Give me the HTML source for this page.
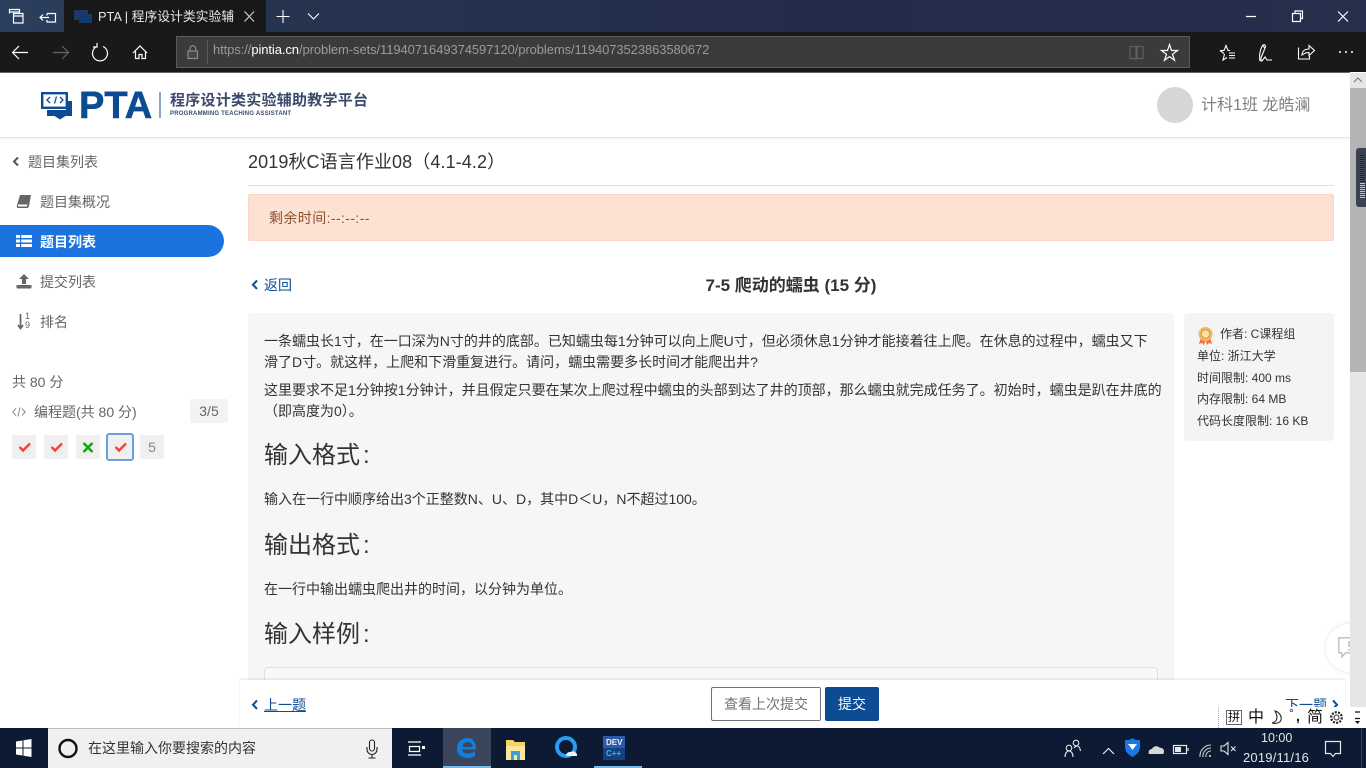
<!DOCTYPE html>
<html lang="zh">
<head>
<meta charset="utf-8">
<title>PTA | 程序设计类实验辅助教学平台</title>
<style>
*{box-sizing:border-box}
html,body{margin:0;padding:0;width:1366px;height:768px;overflow:hidden;background:#fff;font-family:"Liberation Sans","Noto Sans CJK SC",sans-serif}
.a{position:absolute;white-space:nowrap}
svg{position:absolute;overflow:visible}
.s{fill:none;stroke:#fff;stroke-width:1.2}
</style>
</head>
<body>
<!-- title bar -->
<div class="a" style="left:0;top:0;width:1366px;height:32px;background:linear-gradient(90deg,#2b3f5e 0,#27344f 20%,#232c4b 60%,#262f4c 100%)"></div>
<div class="a" style="left:64px;top:0;width:202px;height:32px;background:#181818"></div>
<!-- toolbar -->
<div class="a" style="left:0;top:32px;width:1366px;height:40px;background:#191919"></div>
<div class="a" style="left:0;top:72px;width:1350px;height:1px;background:#666"></div>
<div class="a" style="left:176px;top:36px;width:1014px;height:32px;background:#3b3b3b;border:1px solid #5a5a5a"></div>
<div class="a" style="left:207px;top:40px;width:1px;height:24px;background:#5c5c5c"></div>
<svg style="left:0;top:0" width="1366" height="72">
<g class="s"><path d="M9.500 13.500V9.500h10v4M9.500 12h10M13.500 13.500h9.500v9.500h-9.500zM13.500 16h9.500"/>
<path d="M47 13.500h8.500v8.500h-8.500v-2M47 13.500v2M40 17.500h9M43 14.500l-3 3 3 3"/>
<path d="M276.500 16.500h13M283 10v13M308 13.500l5.500 5.500 5.500-5.500" stroke-width="1.100"/>
<path d="M244.500 11.500l9.500 10M254 11.500l-9.500 10" stroke="#ccc"/>
<path d="M1246 16.500h10M1292.500 13.500h8v8h-8zM1295 13.500v-2.500h7.500v7.500h-2M1338 11.500l10 10M1348 11.500l-10 10"/></g>
<rect x="74" y="10" width="14" height="10" fill="#1c3a63"/><rect x="79" y="14" width="13" height="9" fill="#123a72"/>
<g class="s" stroke-width="1.300"><path d="M28 52.500H13M19 46l-6.500 6.500 6.500 6.500"/>
<path d="M68 52.500H53M62 46l6.500 6.500-6.500 6.500" style="stroke:#666"/>
<path d="M97 46.500a7.500 7.500 0 1 0 6 0M97 43v4h-4"/>
<path d="M133 53l7-7 7 7M135.500 51v7.500h3.500v-4h3v4h3.500V51"/>
<path d="M1161.500 50.500h6l2-6 2 6h6l-5 3.800 2 6-5-3.700-5 3.700 2-6z" stroke-width="1.200"/>
<path d="M1220 50.500h4l2-5 2 5h2M1229 53h6M1229 55.500h6M1229 58h6M1224.500 54l-1.500 6 4-2.500M1220 50.500l4 3" stroke-width="1.100"/>
<path d="M1260 61c-1-5 0-12 3-16 2-1 3 1 2 3l-4 10 0 3h1l3-4 2 3h5M1263 46l2 2" stroke-width="1.100"/>
<path d="M1298.500 47.500v11.500h11v-3M1302 55c0-4 3-6 7-6v-3.500l5.500 5-5.500 5v-3c-3 0-5 1-7 2.500z" stroke-width="1.100"/></g>
<g fill="#fff"><circle cx="1340" cy="52" r="1"/><circle cx="1346" cy="52" r="1"/><circle cx="1352" cy="52" r="1"/></g>
<g fill="none" stroke="#8c8c8c" stroke-width="1.200"><rect x="188" y="51" width="9.500" height="7.500" fill="#8c8c8c" fill-opacity=".15"/><path d="M190 51v-2.500a2.800 2.800 0 0 1 5.600 0V51"/></g>
<g fill="none" stroke="#5f5f5f" stroke-width="1.200"><path d="M1136 47.500v12.500M1130 46.500h6v12h-6zM1137 46.500h6v12h-6z"/></g>
</svg>
<div class="a" style="left:98px;top:8px;font-size:12.800px;line-height:17px;color:#e6e6e6">PTA | 程序设计类实验辅</div>
<div class="a" style="left:213px;top:41px;font-size:13px;line-height:18px;letter-spacing:-.09px;color:#9a9a9a">https://<span style="color:#fff">pintia.cn</span>/problem-sets/1194071649374597120/problems/1194073523863580672</div>

<!-- header -->
<div class="a" style="left:0;top:73px;width:1350px;height:65px;background:#fff;border-bottom:1px solid #e6e6e6;box-shadow:0 1px 2px rgba(0,0,0,.06)"></div>
<svg style="left:0;top:0" width="400" height="130">
<path d="M66 101h6v15H65.500l-5.500 3.500-5.500-3.500H47v-6h19z" fill="#0d4b92"/>
<rect x="42.200" y="93.200" width="24.600" height="14.600" fill="#fff" stroke="#0d4b92" stroke-width="2.400"/>
<path d="M50 97l-3 3 3 3M56.500 96.500l-2 7M60 97l3 3-3 3" fill="none" stroke="#0d4b92" stroke-width="1.300"/>
<rect x="159.500" y="92" width="1" height="26" fill="#0d4b92"/>
</svg>
<div class="a" style="left:79px;top:87px;font-size:38px;line-height:38px;font-weight:700;color:#0d4b92;-webkit-text-stroke:.6px #0d4b92">PTA</div>
<div class="a" style="left:170px;top:92px;font-size:15px;line-height:18px;font-weight:700;color:#3a4a6a;letter-spacing:.25px">程序设计类实验辅助教学平台</div>
<div class="a" style="left:170px;top:111px;font-size:6px;line-height:7px;font-weight:700;color:#3a4a6a;letter-spacing:.21px">PROGRAMMING TEACHING ASSISTANT</div>
<div class="a" style="left:1157px;top:87px;width:36px;height:36px;border-radius:50%;background:#d6d6d6"></div>
<div class="a" style="left:1201px;top:96px;font-size:16px;line-height:20px;color:#808080">计科1班 龙皓澜</div>

<!-- sidebar -->
<div class="a" style="left:0;top:225px;width:224px;height:32px;background:#1a73de;border-radius:0 16px 16px 0"></div>
<svg style="left:0;top:140px" width="240" height="340">
<path d="M18 17.500l-4 4 4 4" fill="none" stroke="#555" stroke-width="2"/>
<path d="M20 55h11l-2 11c0 1-1 2-2 2H18c-1 0-1.500-1-1-3z" fill="#666"/><path d="M18 64.500h9.500l-.5 2H18z" fill="#fff"/>
<g fill="#fff"><rect x="16" y="95" width="16" height="3"/><rect x="16" y="99.500" width="16" height="3"/><rect x="16" y="104" width="16" height="3"/></g>
<rect x="20" y="95" width="1.200" height="12" fill="#1a73de"/>
<path d="M24 134l5 5h-3v5h-4v-5h-3zM16.500 145h15v2.500a1 1 0 0 1-1 1h-13a1 1 0 0 1-1-1z" fill="#666"/>
<path d="M20.500 174v14M18 185l2.500 3.500 2.500-3.500" fill="none" stroke="#666" stroke-width="1.700"/>
</svg>
<div class="a" style="left:25px;top:312px;font-size:9px;line-height:9px;color:#666">1</div>
<div class="a" style="left:25px;top:321px;font-size:9px;line-height:9px;color:#666">9</div>
<div class="a" style="left:28px;top:152px;font-size:14px;line-height:20px;color:#666">题目集列表</div>
<div class="a" style="left:40px;top:192px;font-size:14px;line-height:20px;color:#666">题目集概况</div>
<div class="a" style="left:40px;top:232px;font-size:14px;line-height:20px;color:#fff;font-weight:700">题目列表</div>
<div class="a" style="left:40px;top:272px;font-size:14px;line-height:20px;color:#666">提交列表</div>
<div class="a" style="left:40px;top:312px;font-size:14px;line-height:20px;color:#666">排名</div>
<div class="a" style="left:12px;top:372px;font-size:14px;line-height:20px;color:#666">共 80 分</div>
<svg style="left:12px;top:406px" width="14" height="12"><path d="M4 2.500L.8 6 4 9.500M10 2.500L13.200 6 10 9.500" fill="none" stroke="#888" stroke-width="1"/><path d="M8 1.500L6 10.500" stroke="#888" stroke-width="1"/></svg>
<div class="a" style="left:34px;top:402px;font-size:14px;line-height:20px;color:#666">编程题(共 80 分)</div>
<div class="a" style="left:190px;top:399px;width:38px;height:24px;background:#f3f3f3;border-radius:2px;text-align:center;font-size:14px;line-height:24px;color:#666">3/5</div>
<div class="a" style="left:12px;top:435px;width:24px;height:24px;background:#efefef;border-radius:2px"></div>
<div class="a" style="left:44px;top:435px;width:24px;height:24px;background:#efefef;border-radius:2px"></div>
<div class="a" style="left:76px;top:435px;width:24px;height:24px;background:#efefef;border-radius:2px"></div>
<div class="a" style="left:106px;top:433px;width:28px;height:28px;background:#efefef;border-radius:3px;border:2px solid #6a9fe0"></div>
<div class="a" style="left:140px;top:435px;width:24px;height:24px;background:#efefef;border-radius:2px;text-align:center;font-size:14px;line-height:24px;color:#888">5</div>
<svg style="left:0;top:430px" width="170" height="34"><g fill="none" stroke-width="2.400"><path d="M19.500 17l3.500 3.500 7-7M51.500 17l3.500 3.500 7-7M115.500 17l3.500 3.500 7-7" stroke="#f5403a"/><path d="M83.500 13l9 9M92.500 13l-9 9" stroke="#0aa60a"/></g></svg>

<!-- main -->
<div class="a" style="left:248px;top:150px;font-size:18px;line-height:24px;letter-spacing:.1px;color:#333">2019秋C语言作业08（4.1-4.2）</div>
<div class="a" style="left:248px;top:185px;width:1086px;height:1px;background:#dedede"></div>
<div class="a" style="left:248px;top:194px;width:1086px;height:47px;background:#fde1d3;border:1px solid #fcd6c2;border-radius:2px"></div>
<div class="a" style="left:269px;top:208px;font-size:14px;line-height:20px;letter-spacing:.4px;color:#8a5230">剩余时间:--:--:--</div>
<svg style="left:250px;top:279px" width="12" height="12"><path d="M7 1.500L3 5.700l4 4.200" fill="none" stroke="#0d4b92" stroke-width="2"/></svg>
<div class="a" style="left:264px;top:275px;font-size:14px;line-height:20px;color:#0d4b92">返回</div>
<div class="a" style="left:248px;top:276px;width:1086px;text-align:center;font-size:17px;line-height:20px;font-weight:700;color:#333">7-5 爬动的蠕虫 (15 分)</div>

<div class="a" style="left:248px;top:313px;width:926px;height:370px;background:#f6f6f6;border-radius:4px 4px 0 0;overflow:hidden">
 <div class="a" style="left:16px;top:18px;width:894px;white-space:normal;font-size:14px;line-height:21px;color:#333">一条蠕虫长1寸，在一口深为N寸的井的底部。已知蠕虫每1分钟可以向上爬U寸，但必须休息1分钟才能接着往上爬。在休息的过程中，蠕虫又下滑了D寸。就这样，上爬和下滑重复进行。请问，蠕虫需要多长时间才能爬出井?</div>
 <div class="a" style="left:16px;top:67px;width:900px;white-space:normal;font-size:14px;line-height:21px;color:#333">这里要求不足1分钟按1分钟计，并且假定只要在某次上爬过程中蠕虫的头部到达了井的顶部，那么蠕虫就完成任务了。初始时，蠕虫是趴在井底的（即高度为0）。</div>
 <div class="a" style="left:16px;top:127px;font-size:24px;line-height:32px;color:#333">输入格式<span style="margin-left:3px">:</span></div>
 <div class="a" style="left:16px;top:176px;font-size:14px;line-height:21px;color:#333">输入在一行中顺序给出3个正整数N、U、D，其中D＜U，N不超过100。</div>
 <div class="a" style="left:16px;top:217px;font-size:24px;line-height:32px;color:#333">输出格式<span style="margin-left:3px">:</span></div>
 <div class="a" style="left:16px;top:266px;font-size:14px;line-height:21px;color:#333">在一行中输出蠕虫爬出井的时间，以分钟为单位。</div>
 <div class="a" style="left:16px;top:306px;font-size:24px;line-height:32px;color:#333">输入样例<span style="margin-left:3px">:</span></div>
 <div class="a" style="left:16px;top:354px;width:894px;height:40px;background:#f8f8f8;border:1px solid #dfdfdf;border-radius:4px"></div>
</div>
<!-- info card -->
<div class="a" style="left:1184px;top:313px;width:150px;height:128px;background:#f4f4f4;border-radius:4px"></div>
<svg style="left:1197px;top:326px" width="18" height="20"><path d="M4 11l-2 7 3-1 2 2 2-6zM13 11l2 7-3-1-2 2-2-6z" fill="#f0714a"/><circle cx="8.500" cy="8" r="7" fill="#f4b860"/><circle cx="8.500" cy="8" r="4.300" fill="#fbe2a8" stroke="#e8894a" stroke-width="1"/></svg>
<div class="a" style="left:1220px;top:325px;font-size:12px;line-height:18px;color:#333">作者: C课程组</div>
<div class="a" style="left:1197px;top:347px;font-size:12px;line-height:18px;color:#333">单位: 浙江大学</div>
<div class="a" style="left:1197px;top:369px;font-size:12px;line-height:18px;color:#333">时间限制: 400 ms</div>
<div class="a" style="left:1197px;top:390px;font-size:12px;line-height:18px;color:#333">内存限制: 64 MB</div>
<div class="a" style="left:1197px;top:412px;font-size:12px;line-height:18px;color:#333">代码长度限制: 16 KB</div>
<div class="a" style="left:1326px;top:624px;width:48px;height:48px;border-radius:50%;background:#fff;box-shadow:0 0 5px rgba(0,0,0,.12)"></div>
<svg style="left:1338px;top:637px" width="12" height="22"><path d="M12 .8H.8v15h3v4l4-4H12" fill="none" stroke="#bbb" stroke-width="1.300"/><path d="M11 4v6M11 12v1.500" stroke="#bbb" stroke-width="1.500"/></svg>

<!-- footer -->
<div class="a" style="left:240px;top:680px;width:1105px;height:48px;background:#fff;box-shadow:0 -1px 2px rgba(0,0,0,.1)"></div>
<svg style="left:250px;top:699px" width="12" height="12"><path d="M7 1.500L3 5.700l4 4.200" fill="none" stroke="#0d4b92" stroke-width="2"/></svg>
<div class="a" style="left:264px;top:695px;font-size:14px;line-height:20px;color:#0d4b92;text-decoration:underline">上一题</div>
<div class="a" style="left:711px;top:687px;width:110px;height:34px;border:1px solid #6c757d;border-radius:2px;background:#fff;text-align:center;font-size:14px;line-height:32px;color:#6c757d">查看上次提交</div>
<div class="a" style="left:825px;top:687px;width:54px;height:34px;background:#0d4b92;border-radius:2px;text-align:center;font-size:14px;line-height:34px;color:#fff">提交</div>
<div class="a" style="left:1285px;top:695px;font-size:14px;line-height:20px;color:#0d4b92">下一题</div>
<svg style="left:1330px;top:699px" width="12" height="12"><path d="M3 1.500l4 4.200-4 4.200" fill="none" stroke="#0d4b92" stroke-width="2"/></svg>

<!-- scrollbar -->
<div class="a" style="left:1350px;top:73px;width:16px;height:655px;background:#e6e6e6"></div>
<div class="a" style="left:1350px;top:88px;width:16px;height:284px;background:#b4b4b4"></div>
<svg style="left:1350px;top:72px" width="16" height="16"><path d="M4 10l4-4 4 4" fill="none" stroke="#777" stroke-width="1"/></svg>
<div class="a" style="left:1356px;top:148px;width:10px;height:59px;background:#3b4252;border-radius:3px 0 0 3px"></div>
<div class="a" style="left:1360px;top:155px;width:5px;height:28px;background:repeating-linear-gradient(#222 0 1px,#4a4f5c 1px 2px)"></div>
<div class="a" style="left:1360px;top:183px;width:5px;height:16px;background:repeating-linear-gradient(#9fe08a 0 1px,#3b4252 1px 2px)"></div>

<!-- IME -->
<div class="a" style="left:1218px;top:707px;width:148px;height:21px;background:#fff"></div>
<div class="a" style="left:1218px;top:707px;width:0;height:21px;border-left:1px dotted #aaa"></div>
<div class="a" style="left:1226px;top:710px;width:16px;height:15px;border:1px solid #666;text-align:center;font-size:12px;line-height:13px;color:#111">拼</div>
<div class="a" style="left:1248px;top:709px;font-size:16px;line-height:18px;color:#111">中</div>
<svg style="left:1270px;top:710px" width="14" height="16"><path d="M5 1c4 1 7 5 6 9-1 3-5 4-9 3 4-1 5-3 5-6 0-2-1-4-2-6z" fill="none" stroke="#222" stroke-width="1.100"/></svg>
<div class="a" style="left:1289px;top:705px;font-size:12px;line-height:16px;color:#111">°</div>
<div class="a" style="left:1296px;top:707px;font-size:14px;line-height:18px;font-weight:700;color:#111">,</div>
<div class="a" style="left:1307px;top:709px;font-size:16px;line-height:18px;color:#111">简</div>
<svg style="left:1329px;top:710px" width="15" height="15"><circle cx="7.500" cy="7.500" r="2.500" fill="none" stroke="#222" stroke-width="1"/><circle cx="7.500" cy="7.500" r="5.300" fill="none" stroke="#222" stroke-width="2.200" stroke-dasharray="2 1.300"/></svg>
<svg style="left:1354px;top:711px" width="8" height="14"><path d="M1 1h5M1 7.500h5" stroke="#111" stroke-width="1.300"/><path d="M1 10h5l-2.500 3z" fill="#111"/></svg>

<!-- taskbar -->
<div class="a" style="left:0;top:728px;width:1366px;height:40px;background:#0c1a33"></div>
<div class="a" style="left:48px;top:728px;width:344px;height:40px;background:#f0f0f0;border-top:1px solid #bbb"></div>
<div class="a" style="left:443px;top:728px;width:48px;height:40px;background:#3b465c"></div>
<div class="a" style="left:443px;top:766px;width:48px;height:2px;background:#76b9ed"></div>
<div class="a" style="left:594px;top:766px;width:48px;height:2px;background:#76b9ed"></div>
<svg style="left:0;top:728px" width="1366" height="40">
<path d="M16 13.500l6.500-1v7H16zM23.500 12.300l8-1.300v8.500h-8zM16 20.500h6.500v7L16 26.500zM23.500 20.500h8V29l-8-1.300z" fill="#fff"/>
<circle cx="68" cy="20.500" r="8.500" fill="none" stroke="#111" stroke-width="2.400"/>
<g fill="none" stroke="#222" stroke-width="1.100"><rect x="369.500" y="12" width="5" height="11" rx="2.500"/><path d="M367 19v2.500a5 5 0 0 0 10 0V19M372 26.500V30M368.500 30h7"/></g>
<g fill="none" stroke="#fff" stroke-width="1.200"><path d="M408 14h13M408 27h13M409.500 18.500h10v5h-10z"/></g><rect x="422" y="18" width="3" height="3" fill="#fff"/>
<path d="M468 10c-7 0-11 5-11 10 0 7 5 10 11 10 3 0 5-.7 7-2v-4.500c-5 3-12 3-13-2h14c0-7-3-11.500-8-11.500zm-5.500 9c.5-3.500 3-5 5.500-5 3 0 4.500 2 4.500 5z" fill="#0f7fe0"/>
<path d="M506 12h7l2 2h10v18h-19z" fill="#f6d365"/><path d="M506 18h19v14h-19z" fill="#fde79a"/><path d="M511 23h9v9h-9z" fill="#3aa0dc"/><rect x="514" y="27" width="3" height="5" fill="#fde79a"/>
<circle cx="566" cy="19" r="9" fill="none" stroke="#2a9df0" stroke-width="4"/><path d="M566 28a4 4 0 0 1 5-4 4 4 0 0 1 6 4z" fill="#e8f2fb"/>
<rect x="603" y="8" width="22" height="24" fill="#2c5aa8"/><rect x="603" y="20" width="22" height="12" fill="#14407f"/>
<g fill="none" stroke="#e6e6e6" stroke-width="1.100"><circle cx="1076" cy="15" r="2.800"/><circle cx="1069" cy="20" r="2.800"/><path d="M1065 29c0-4 2-6 4-6s4 2 4 6M1074 20c1-1.500 2-2 3-2 2 0 3 2 3.500 5"/></g>
<path d="M1103 26l5.500-5.500 5.500 5.500" fill="none" stroke="#e6e6e6" stroke-width="1.200"/>
<path d="M1125 12c3 .5 5 0 7.500-2 2.500 2 4.500 2.500 7.500 2v7c0 5-4 8-7.500 10-3.500-2-7.500-5-7.500-10z" fill="#1c78e8"/><path d="M1128 16h9l-4.500 6z" fill="#fff"/>
<path d="M1149 26c-1.500-3 1-5 3-5 1-3 6-4 8-1 2-.5 4 1 4 3.500s-1 2.500-2 2.500z" fill="#d8d8d8"/>
<g fill="none" stroke="#e6e6e6" stroke-width="1.200"><rect x="1173.500" y="17.500" width="13" height="8"/><path d="M1188 20v3"/></g><rect x="1175" y="19" width="6" height="5" fill="#e6e6e6"/>
<g fill="none" stroke="#cfcfcf" stroke-width="1.100"><path d="M1200 29a11 11 0 0 1 11-12M1203 29a8 8 0 0 1 8-9M1206 29a5 5 0 0 1 5-6"/></g><circle cx="1210" cy="28" r="1" fill="#e6e6e6"/>
<g fill="none" stroke="#e6e6e6" stroke-width="1.100"><path d="M1221 18h3l4-3.500v12L1224 23h-3zM1231 18.500l4.500 4.500M1235.500 18.500L1231 23"/></g>
<path d="M1325.500 13.500h15v12h-5l-2.500 3-2.500-3h-5z" fill="none" stroke="#e6e6e6" stroke-width="1.200"/>
</svg>
<div class="a" style="left:88px;top:739px;font-size:14px;line-height:19px;color:#333">在这里输入你要搜索的内容</div>
<div class="a" style="left:606px;top:738px;font-size:8px;line-height:9px;font-weight:700;color:#e8eef8">DEV</div>
<div class="a" style="left:606px;top:749px;font-size:8px;line-height:9px;font-weight:700;color:#49b5e8">C++</div>
<div class="a" style="left:1261px;top:730px;font-size:12.500px;line-height:17px;color:#e6e6e6">10:00</div>
<div class="a" style="left:1243px;top:749px;font-size:13px;line-height:17px;letter-spacing:.2px;color:#e6e6e6">2019/11/16</div>
<div class="a" style="left:1361px;top:728px;width:1px;height:40px;background:#3a4254"></div>
</body>
</html>
